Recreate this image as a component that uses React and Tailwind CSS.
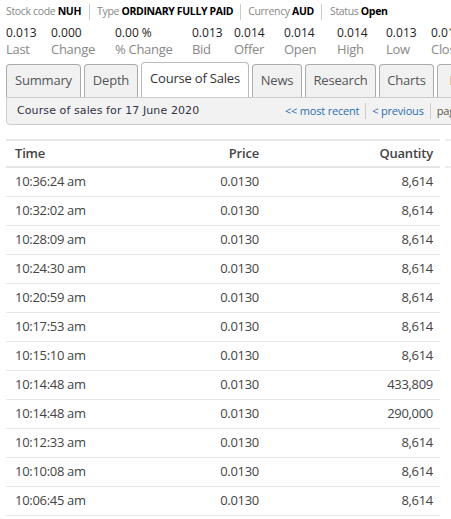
import React from "react";

const stats = [
  { value: "0.013", label: "Last", w: "w-[45px]" },
  { value: "0.000", label: "Change", w: "w-[64px]" },
  { value: "0.00 %", label: "% Change", w: "w-[77px]" },
  { value: "0.013", label: "Bid", w: "w-[42px]" },
  { value: "0.014", label: "Offer", w: "w-[50px]" },
  { value: "0.014", label: "Open", w: "w-[53px]" },
  { value: "0.014", label: "High", w: "w-[49px]" },
  { value: "0.013", label: "Low", w: "w-[45px]" },
  { value: "0.013", label: "Close", w: "w-[45px]" },
];

const tabs = [
  { name: "Summary", w: "w-[75px]" },
  { name: "Depth", w: "w-[54px]" },
  { name: "Course of Sales", w: "w-[108px]", active: true },
  { name: "News", w: "w-[50px]" },
  { name: "Research", w: "w-[71px]" },
  { name: "Charts", w: "w-[55px]" },
  { name: "Prices", w: "w-[60px]" },
];

const sales = [
  ["10:36:24 am", "0.0130", "8,614"],
  ["10:32:02 am", "0.0130", "8,614"],
  ["10:28:09 am", "0.0130", "8,614"],
  ["10:24:30 am", "0.0130", "8,614"],
  ["10:20:59 am", "0.0130", "8,614"],
  ["10:17:53 am", "0.0130", "8,614"],
  ["10:15:10 am", "0.0130", "8,614"],
  ["10:14:48 am", "0.0130", "433,809"],
  ["10:14:48 am", "0.0130", "290,000"],
  ["10:12:33 am", "0.0130", "8,614"],
  ["10:10:08 am", "0.0130", "8,614"],
  ["10:06:45 am", "0.0130", "8,614"],
];

export default function App() {
  return (
    <div
      className="w-[451px] h-[519px] overflow-hidden bg-white text-[#333]"
      style={{ fontFamily: '"Open Sans", "Noto Sans", sans-serif' }}
    >
      {/* Stock info line */}
      <div className="flex items-center h-[20px] mt-[2px] pl-[6px] text-[10.5px] whitespace-nowrap tracking-[-0.35px]">
        <span className="pr-[8px] border-r border-[#ccc]">
          <span className="text-[#888]">Stock code </span>
          <span className="font-bold text-black">NUH</span>
        </span>
        <span className="px-[7px] border-r border-[#ccc]">
          <span className="text-[#888]">Type </span>
          <span className="font-bold text-black">ORDINARY FULLY PAID</span>
        </span>
        <span className="px-[7px] border-r border-[#ccc]">
          <span className="text-[#888]">Currency </span>
          <span className="font-bold text-black">AUD</span>
        </span>
        <span className="px-[8px]">
          <span className="text-[#888]">Status </span>
          <span className="font-bold text-black"> Open</span>
        </span>
      </div>

      {/* Stats */}
      <div className="flex pl-[6px] mt-[3px] whitespace-nowrap">
        {stats.map((s) => (
          <div key={s.label} className={`${s.w} shrink-0 flex flex-col`}>
            <span className="text-[12px] leading-[16px] text-[#222]">{s.value}</span>
            <span className="text-[13px] leading-[16px] text-[#888] tracking-[-0.3px]">{s.label}</span>
          </div>
        ))}
      </div>

      {/* Tabs */}
      <div className="flex items-end gap-[3px] pl-[6px] mt-[5px] h-[35px] whitespace-nowrap">
        {tabs.map((t) => (
          <div
            key={t.name}
            className={`${t.w} shrink-0 flex items-center justify-center border border-b-0 rounded-t-[4px] text-[13px] tracking-[-0.2px] ${
              t.active
                ? "h-[35px] bg-white border-[#bbb] text-[#333] pb-[2px]"
                : "h-[33px] bg-[#f1f1f1] border-[#aaa] text-[#555]"
            }`}
          >
            {t.name}
          </div>
        ))}
      </div>

      {/* Sub header */}
      <div className="ml-[6px] w-[460px] h-[28px] flex items-center bg-[#f2f2f2] border border-[#ccc] rounded-b-[4px] whitespace-nowrap">
        <span
          className="pl-[10px] w-[278px] shrink-0 text-[11px] tracking-[0.1px] text-[#334]"
          style={{ fontFamily: '"DejaVu Sans", Verdana, sans-serif' }}
        >
          Course of sales for 17 June 2020
        </span>
        <span className="text-[11px] tracking-[-0.2px] flex items-center">
          <span className="text-[#2a6fb0] pr-[6px] border-r border-[#ccc]">&lt;&lt; most recent</span>
          <span className="text-[#2a6fb0] px-[6px] border-r border-[#ccc]">&lt; previous</span>
          <span className="text-[#555] pl-[6px]">page</span>
        </span>
      </div>

      {/* Table */}
      <div className="flex mt-[14px]">
        <div className="ml-[6px] w-[434px] shrink-0">
          <div className="grid grid-cols-[122px_122px_1fr] h-[29px] items-center pl-[9px] pr-[7px] border-t-2 border-b-2 border-[#e6e6e6] text-[13px] font-semibold text-[#444] tracking-[-0.2px]">
            <span>Time</span>
            <span className="text-right">Price</span>
            <span className="text-right">Quantity</span>
          </div>
          {sales.map((r, i) => (
            <div
              key={i}
              className="grid grid-cols-[122px_122px_1fr] h-[29px] items-center pl-[9px] pr-[7px] border-b border-[#e8e8e8] text-[13px] text-[#444] tracking-[-0.3px]"
            >
              <span>{r[0]}</span>
              <span className="text-right">{r[1]}</span>
              <span className="text-right">{r[2]}</span>
            </div>
          ))}
        </div>
        <div className="ml-[5px] w-[20px] h-[29px] border-t-2 border-b-2 border-[#eee]" />
      </div>
    </div>
  );
}
